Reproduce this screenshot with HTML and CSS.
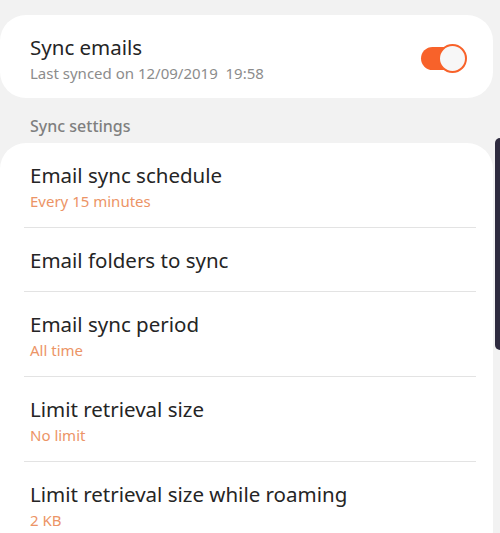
FILE: index.html
```html
<!DOCTYPE html>
<html lang="en">
<head>
    <meta charset="UTF-8">
    <meta name="viewport" content="width=device-width, initial-scale=1.0">
    <title>Sync settings</title>
    <link rel="stylesheet" href="styles.css">
</head>
<body>
    <main class="screen">
        <section class="card">
            <div class="row row-switch">
                <div class="row-text">
                    <p class="row-title">Sync emails</p>
                    <p class="row-sub">Last synced on 12/09/2019&nbsp; 19:58</p>
                </div>
                <span class="switch"><span class="switch-thumb"></span></span>
            </div>
        </section>

        <h2 class="section-label">Sync settings</h2>

        <section class="card card-list">
            <div class="row">
                <p class="row-title">Email sync schedule</p>
                <p class="row-value">Every 15 minutes</p>
            </div>
            <div class="row row-single">
                <p class="row-title">Email folders to sync</p>
            </div>
            <div class="row">
                <p class="row-title">Email sync period</p>
                <p class="row-value">All time</p>
            </div>
            <div class="row">
                <p class="row-title">Limit retrieval size</p>
                <p class="row-value">No limit</p>
            </div>
            <div class="row">
                <p class="row-title">Limit retrieval size while roaming</p>
                <p class="row-value">2 KB</p>
            </div>
        </section>

        <div class="scrollbar"></div>
    </main>
</body>
</html>
```

FILE: styles.css
```css
body {
    margin: 0;
    padding: 0;
    background-color: #f2f2f2;
    font-family: "Noto Sans", "Open Sans", sans-serif;
    color: #252525;
}

.screen {
    position: relative;
    padding: 15px 7px 0 0;
    height: 518px;
    overflow: hidden;
}

.card {
    background-color: #fff;
    border-radius: 26px;
}

.card-list {
    padding-bottom: 10px;
}

.row {
    margin: 0 17px 0 24px;
    padding: 19px 6px 16px;
    border-bottom: 1px solid #e3e3e3;
}

.row:last-child {
    border-bottom: none;
}

.row-single {
    padding-bottom: 18px;
}

.row-switch {
    display: flex;
    align-items: center;
    justify-content: space-between;
    border-bottom: none;
    padding: 19px 0 15px 6px;
    margin-right: 26px;
}

.row-title {
    margin: 0;
    font-size: 20.5px;
    line-height: 26px;
}

.row-sub,
.row-value {
    margin: 3px 0 0;
    font-size: 15px;
    line-height: 20px;
}

.row-sub {
    color: #8c8c8c;
}

.row-value {
    color: #ec9466;
}

.section-label {
    margin: 0;
    padding: 18px 30px 7px;
    font-size: 16px;
    line-height: 20px;
    font-weight: 500;
    color: #7f7f7f;
}

.switch {
    position: relative;
    display: block;
    width: 46px;
    height: 23px;
}

.switch::before {
    content: "";
    position: absolute;
    left: 0;
    top: 0;
    width: 34px;
    height: 23px;
    border-radius: 12px;
    background-color: #f8622a;
}

.switch-thumb {
    position: absolute;
    right: 0;
    top: -3px;
    width: 25px;
    height: 25px;
    border: 2px solid #f8622a;
    border-radius: 50%;
    background-color: #f7f7f7;
}

.scrollbar {
    position: absolute;
    right: 0;
    top: 138px;
    width: 5px;
    height: 212px;
    border-radius: 5px 0 0 5px;
    background-color: #2e2b3f;
}
```
